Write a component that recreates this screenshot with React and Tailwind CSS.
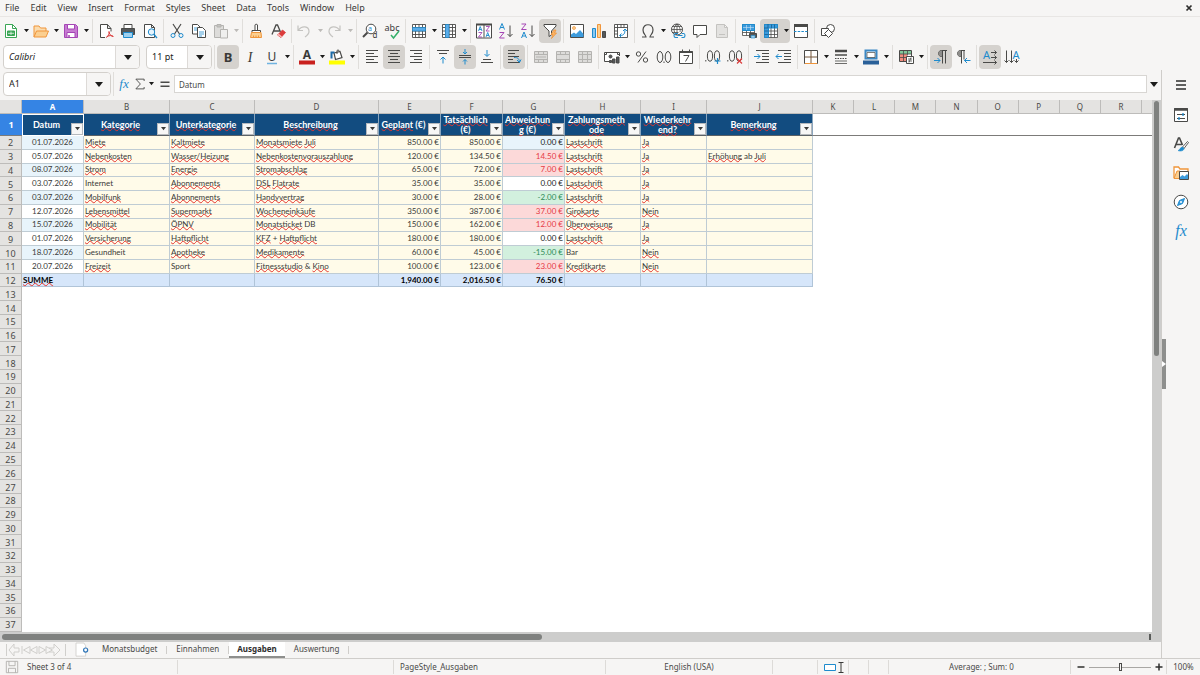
import React from 'react';
import clsx from 'clsx';

const BLUE = '#1e8bcd';
const ORANGE = '#f0953a';
const RED = '#dc3b3b';
const PURPLE = '#a546b5';
const GREY = '#c4c3c0';

const Svg = ({ children, className = 'size-4', stroke = '#4a4a48' }) => (
  <svg viewBox="0 0 16 16" className={clsx('shrink-0 overflow-visible', className)} fill="none" stroke={stroke} strokeWidth="1" aria-hidden="true">
    {children}
  </svg>
);

const Letter = ({ x = 8, y = 12, size = 10, fill = '#3a3a38', serif, italic, bold, children }) => (
  <text
    x={x}
    y={y}
    fontSize={size}
    fill={fill}
    stroke="none"
    textAnchor="middle"
    fontFamily={serif ? 'Liberation Serif, serif' : 'Noto Sans, sans-serif'}
    fontStyle={italic ? 'italic' : 'normal'}
    fontWeight={bold ? 700 : 400}
  >
    {children}
  </text>
);

const gridPath = 'M1.5 1.5h13v13h-13zM4.5 1.5v13M8 1.5v13M11.5 1.5v13M1.5 4.5h13M1.5 8h13M1.5 11.5h13';

const icons = {
  new: (
    <Svg stroke="#3aa655">
      <path d="M2.5 1.5h7l4 4v9h-11z" fill="#fff" />
      <path d="M9.5 1.5v4h4" />
      <path d="M4.500 8h7v4.500h-7z" fill="#3aa655" />
      <path d="M5 10.300h6M8 8.500v3.500" stroke="#fff" strokeWidth=".7" />
    </Svg>
  ),
  open: (
    <Svg stroke={ORANGE}>
      <path d="M1 14V3h5l1.500 2H13v3" fill="#fbdcae" />
      <path d="M1 14L3.500 8H15.500L13 14z" fill="#fbcf90" />
    </Svg>
  ),
  save: (
    <Svg stroke={PURPLE}>
      <path d="M1.500 1.500h11l2 2v11h-13z" fill="#c77bd2" />
      <path d="M4.500 1.500h7v4.500h-7zM4 14.500V9.500h8v5z" fill="#fff" />
      <path d="M6 12v2.500" strokeWidth="1.500" />
    </Svg>
  ),
  pdf: (
    <Svg>
      <path d="M7 14.500H2.500v-13h7l3.500 4v3M9.500 1.500v4H13" fill="#fff" />
      <path d="M8 14.500c2.500-1 3.500-4 3-6M15.500 13.500c-2-1.500-4-1-6.500 0M11 8.500c0 2 1.500 4.500 4 5" stroke={RED} />
    </Svg>
  ),
  print: (
    <Svg>
      <path d="M4 5.500v-4h8v4" fill="#fff" />
      <path d="M1.500 5.500h13v6h-13z" fill="#55585a" />
      <path d="M3.500 9.500h9v5h-9z" fill="#9fd0ee" stroke={BLUE} />
    </Svg>
  ),
  preview: (
    <Svg>
      <path d="M2.500 1.500h7l3 3v10h-10zM9.500 1.500v3h3" fill="#fff" />
      <circle cx="9.500" cy="9" r="3.200" fill="#e5f3fc" stroke={BLUE} />
      <path d="M12 11.500l3 3.500" stroke={BLUE} strokeWidth="1.300" />
    </Svg>
  ),
  cut: (
    <Svg>
      <path d="M4 1l6.500 10M12 1L5.500 11" strokeWidth="1.200" />
      <circle cx="4" cy="12.500" r="2" stroke={BLUE} />
      <circle cx="12" cy="12.500" r="2" stroke={BLUE} />
    </Svg>
  ),
  copy: (
    <Svg>
      <path d="M1.500 1.500h5l2.500 2.500v7h-7.500z" fill="#fff" />
      <path d="M6.500 4.500h5l3 3v7h-8z" fill="#fff" />
      <path d="M3 5h3M3 7h3M8 9h5M8 11h5M8 13h3" stroke={BLUE} strokeWidth=".8" />
    </Svg>
  ),
  paste: (
    <Svg stroke="#b4b3b0">
      <path d="M1.500 2.500h9v12h-9z" fill="#dddcda" />
      <path d="M4 1.500h4v2.500H4z" fill="#c4c3c0" />
      <path d="M7.500 6.500h7v8.500h-7z" fill="#efefee" />
    </Svg>
  ),
  clone: (
    <Svg>
      <path d="M7 7V2c0-1 2.500-1 2.500 0v5" fill="#fff" />
      <path d="M4 7.500h8.500v2H4z" fill="#fff" />
      <path d="M3.500 9.500h9.500l.5 5h-11z" fill="#fbcf90" stroke={ORANGE} />
      <path d="M5.500 14.500v-2M8 14.500v-2M10.500 14.500v-2" stroke={ORANGE} />
    </Svg>
  ),
  clear: (
    <Svg>
      <path d="M2 11.500L6 2h1.500l3 7M3.500 8h6" strokeWidth="1.300" />
      <path d="M7.500 12l5-5 3 2.500-4.500 5z" fill={RED} stroke={RED} strokeWidth=".8" />
      <path d="M7.500 12l3.500 2.500 1-1-3.500-3z" fill="#f9b8b8" stroke="none" />
    </Svg>
  ),
  undo: (
    <Svg stroke={GREY}>
      <path d="M1 2.500v5h5M1 7.500C5 2 12 3 12 8.500c0 2-2 4-4 5.500" strokeWidth="1.200" />
    </Svg>
  ),
  redo: (
    <Svg stroke={GREY}>
      <path d="M13 2.500v5H8M13 7.500C9 2 2 3 2 8.500c0 2 2 4 4 5.500" strokeWidth="1.200" />
    </Svg>
  ),
  find: (
    <Svg>
      <circle cx="9" cy="6" r="4.800" fill="#fff" />
      <path d="M5.500 9.500L1 14" strokeWidth="2" />
      <Letter x={8} y={8} size={7} fill={BLUE}>a</Letter>
      <Letter x={13} y={15} size={8}>d</Letter>
    </Svg>
  ),
  spell: (
    <Svg>
      <Letter x={8} y={7.5} size={9}>abc</Letter>
      <path d="M7 12l2.500 3L15 8" stroke="#35b06a" strokeWidth="1.500" />
    </Svg>
  ),
  row: (
    <Svg>
      <path d={gridPath} fill="#fff" strokeWidth=".9" />
      <path d="M1.500 4.500h13V8h-13z" fill="#5badea" stroke={BLUE} strokeWidth=".7" />
    </Svg>
  ),
  column: (
    <Svg>
      <path d={gridPath} fill="#fff" strokeWidth=".9" />
      <path d="M4.500 1.500H8v13H4.500z" fill="#5badea" stroke={BLUE} strokeWidth=".7" />
    </Svg>
  ),
  sort: (
    <Svg>
      <path d="M.500 1.500h15v13.500H.500zM8 1.500v13" fill="#fff" />
      <path d="M0 1.500h16" strokeWidth="2" />
      <path d="M2.500 8l1.700-4.500L6 8M3 6.500h2.500M10 14l1.700-4.500 1.800 4.500M10.500 12.500H13" stroke={BLUE} strokeWidth=".9" />
      <path d="M2.500 9.500H6L2.500 14H6M10 3.500h3.500L10 8h3.500" stroke={PURPLE} strokeWidth=".9" />
    </Svg>
  ),
  asc: (
    <Svg>
      <path d="M1.500 6.500L4 .500l2.500 6M2.300 4.500h3.400" stroke={BLUE} />
      <path d="M1.500 9.500h4.500l-4.500 5.500h5" stroke={PURPLE} />
      <path d="M12 2.500v11M9.500 11l2.500 2.500L14.500 11" />
    </Svg>
  ),
  desc: (
    <Svg>
      <path d="M1.500 1h4.500L1.500 6.500h5" stroke={PURPLE} />
      <path d="M1.500 15L4 9l2.500 6M2.300 13h3.400" stroke={BLUE} />
      <path d="M12 2.500v11M9.500 11l2.500 2.500L14.500 11" />
    </Svg>
  ),
  filter: (
    <Svg>
      <path d="M2 1.500h12v1.500L9.500 8v4L7 13.500V8L2 3z" fill="#fff" />
      <path d="M12 7l-3 4.500h2L9.500 15.500 14.500 10h-2L14 7z" fill="#fbb466" stroke={ORANGE} strokeWidth=".8" />
    </Svg>
  ),
  image: (
    <Svg>
      <path d="M1.500 1.500h13v13h-13z" fill="#fff" />
      <circle cx="5" cy="5" r="1.500" fill="#fbcf90" stroke={ORANGE} strokeWidth=".7" />
      <path d="M2 14v-2.500l3-2 2 1.500L11 7l3.500 4v3z" fill="#3d9bdc" stroke="none" />
    </Svg>
  ),
  chart: (
    <Svg>
      <path d="M1.500 5.500h3v9h-3z" fill="#8dc8ef" stroke={BLUE} />
      <path d="M6.500 1.500h3v13h-3z" fill="#fbcf90" stroke={ORANGE} />
      <path d="M11.500 8.500h3v6h-3z" fill="#55585a" />
    </Svg>
  ),
  pivot: (
    <Svg>
      <path d="M1.500 1.500h13v13h-13zM1.500 4.500h13M4.500 1.500v13M8 1.500v3M11 1.500v3M1.500 8h3M1.500 11h3" fill="#fff" strokeWidth=".9" />
      <path d="M7 12.500c4 0 5-2 5-6M10 8l2-2 2 2M8.500 10.500l-2 2 2 2" stroke={BLUE} />
    </Svg>
  ),
  omega: (
    <Svg>
      <path d="M2 14h4c0-2-3-3-3-7 0-7 10-7 10 0 0 4-3 5-3 7h4" strokeWidth="1.200" />
    </Svg>
  ),
  link: (
    <Svg>
      <circle cx="7" cy="6.500" r="5.500" fill="#fff" />
      <path d="M1.500 6.500h11M7 1v10M2.500 3.500h9M2.500 9.500h6M7 1c-4 3-4 8 0 11M7 1c3 3 3.500 6 3 8" strokeWidth=".8" />
      <path d="M8 10.500H5.500c-2 0-2 4 0 4H8M11.500 10.500H13.500c2 0 2 4 0 4h-2M7.500 12.500h5" stroke={BLUE} strokeWidth="1.100" />
    </Svg>
  ),
  comment: (
    <Svg>
      <path d="M1.500 2.500h13v9H8L5 14.500v-3H1.500z" fill="#fff" />
    </Svg>
  ),
  header: (
    <Svg stroke={GREY}>
      <path d="M2.500 1.500h8l3 3v10h-11zM10.500 1.500v3h3" fill="#e3e2e0" />
      <path d="M5 11.500h6" />
    </Svg>
  ),
  area: (
    <Svg>
      <path d="M1.500 1.500h12v11h-12zM5.500 1.500v11M9.500 1.500v11M1.500 9.500h12" fill="#fff" strokeWidth=".8" />
      <path d="M1.500 1.500h12v6h-12z" fill="#3d9bdc" stroke={BLUE} />
      <path d="M5.500 2v5M9.500 2v5M2 4.500h11" stroke="#c9e4f7" strokeWidth=".6" />
      <path d="M8.500 10.500h7v4h-7z" fill="#55585a" />
      <path d="M10 12.500h4v2.500h-4z" fill="#9fd0ee" stroke={BLUE} strokeWidth=".6" />
    </Svg>
  ),
  freeze: (
    <Svg>
      <path d={gridPath} fill="#fff" strokeWidth=".8" />
      <path d="M1.500 1.500h13v3.500H5.500v9.500h-4z" fill="#3d9bdc" stroke={BLUE} />
      <path d="M1.500 8h4M1.500 11.500h4M8.500 1.500V5M11.500 1.500V5M5 1v4H1" stroke="#175c8c" strokeWidth=".8" />
    </Svg>
  ),
  split: (
    <Svg>
      <path d="M1.500 1.500h13v13h-13z" fill="#fff" />
      <path d="M1 2.500h14" strokeWidth="3" />
      <path d="M1 8.500h14" stroke={BLUE} strokeDasharray="2.500 1.200" />
    </Svg>
  ),
  shapes: (
    <Svg>
      <circle cx="10.500" cy="5.500" r="4" fill="#fff" />
      <path d="M1.500 5.500h7v7h-7z" fill="#fff" />
      <path d="M8.500 6.500l4 4-4 4-4-4z" fill="#fff" />
    </Svg>
  ),
  bold: <Svg><Letter size={13} y={12.5} bold>B</Letter></Svg>,
  italic: <Svg><Letter size={14} y={12.5} serif italic>I</Letter></Svg>,
  underline: (
    <Svg>
      <Letter size={12} y={11.5}>U</Letter>
      <path d="M3 14.500h10" stroke="#6fb3e0" strokeWidth="1.500" />
    </Svg>
  ),
  color: (
    <Svg>
      <Letter size={12} y={10} bold>A</Letter>
      <path d="M0 13.500h16" stroke="#c9211e" strokeWidth="4" />
    </Svg>
  ),
  highlight: (
    <Svg>
      <path d="M5 4l6-1.500 2 6-6.500 2z" fill="#fff" strokeWidth="1.200" />
      <path d="M8 5V2c0-1.500 2-1.500 2 0" />
      <path d="M2.500 9.500V3.500h3" stroke="#1c6ba8" strokeWidth="2" />
      <path d="M0 13.500h16" stroke="#ffff00" strokeWidth="4" />
    </Svg>
  ),
  left: <Svg><path d="M2 1.500h12M2 4.500h8M2 7.500h12M2 10.500h8M2 13.500h12" /></Svg>,
  center: <Svg><path d="M2 1.500h12M4 4.500h8M2 7.500h12M4 10.500h8M2 13.500h12" /></Svg>,
  right: <Svg><path d="M2 1.500h12M6 4.500h8M2 7.500h12M6 10.500h8M2 13.500h12" /></Svg>,
  top: (
    <Svg>
      <path d="M2 1.500h12M4 4.500h8" />
      <path d="M8 14.500v-6M5.500 10.500L8 8l2.500 2.500" stroke={BLUE} />
    </Svg>
  ),
  middle: (
    <Svg>
      <path d="M2 6.500h12M2 8.500h12" />
      <path d="M8 0v5M6 3l2 2 2-2M8 15.500v-5M6 12.500l2-2 2 2" stroke={BLUE} />
    </Svg>
  ),
  bottom: (
    <Svg>
      <path d="M2 13.500h12M4 10.500h8" />
      <path d="M8 1v6M5.500 5L8 7.500 10.500 5" stroke={BLUE} />
    </Svg>
  ),
  wrap: (
    <Svg>
      <path d="M2 1.500h11M2 4.500h7M2 7.500h11M2 10.500h5M2 13.500h12" />
      <path d="M8 8.500c4 0 5 1 5.500 4.500M11 11l2.500 2.500L15 10.500" stroke={BLUE} />
    </Svg>
  ),
  merge: <Svg stroke="#b4b3b0"><path d="M1.500 2.500h13v11h-13zM1.500 5.500h13M1.500 10.500h13M5.500 2.500v3M10.500 2.500v3M5.500 10.500v3M10.500 10.500v3M3 8h10" fill="#dddcda" /></Svg>,
  mergeCells: <Svg stroke="#b4b3b0"><path d="M1.500 2.500h13v11h-13zM1.500 5.500h13M1.500 10.500h13M5.500 2.500v3M10.500 2.500v3M5.500 10.500v3M10.500 10.500v3" fill="#dddcda" /></Svg>,
  splitCells: <Svg stroke="#b4b3b0"><path d="M1.500 2.500h13v11h-13zM1.500 5.500h13M1.500 10.500h13M5.500 2.500v11M10.500 2.500v11" fill="#dddcda" /></Svg>,
  currency: (
    <Svg>
      <path d="M7 12.500H.500v-9h15V7M2.500 3.500v2h-2M13.500 3.500v2h2" fill="#fff" />
      <circle cx="6.500" cy="7.500" r="1.500" fill="#55585a" />
      <path d="M5.500 11.500h2v2h-2zM8.500 10h2.500v4H8.500zM12.500 8h2.500v6h-2.500z" fill="#55585a" />
    </Svg>
  ),
  percent: (
    <Svg>
      <circle cx="4.500" cy="5" r="2.200" />
      <circle cx="11.500" cy="11" r="2.200" />
      <path d="M12 2.500L4 13.500" />
    </Svg>
  ),
  number: (
    <Svg>
      <ellipse cx="4" cy="8" rx="2.800" ry="5.500" />
      <ellipse cx="12" cy="8" rx="2.800" ry="5.500" />
      <path d="M8 12.500v1.500" />
    </Svg>
  ),
  date: (
    <Svg>
      <path d="M1.500 2.500h13v12h-13z" fill="#fff" />
      <path d="M1.500 3h13" strokeWidth="2" />
      <path d="M4.500 .500v2M11.500 .500v2M5.500 6.500H11l-3.500 6" />
    </Svg>
  ),
  addDecimal: (
    <Svg>
      <ellipse cx="5" cy="7" rx="2.600" ry="5.200" />
      <ellipse cx="12" cy="7" rx="2.600" ry="5.200" />
      <path d="M.800 11v1.500" />
      <path d="M12.500 9v6M9.500 12h6" stroke={BLUE} strokeWidth="1.200" />
    </Svg>
  ),
  delDecimal: (
    <Svg>
      <ellipse cx="5" cy="7" rx="2.600" ry="5.200" />
      <ellipse cx="12" cy="7" rx="2.600" ry="5.200" />
      <path d="M.800 11v1.500" />
      <path d="M10 9.500l5 5M15 9.500l-5 5" stroke={RED} strokeWidth="1.200" />
    </Svg>
  ),
  indent: (
    <Svg>
      <path d="M2 1.500h13M8 4.500h7M8 7.500h7M8 10.500h7M2 13.500h13" />
      <path d="M0 7.500h6M3.500 5L6 7.500 3.500 10" stroke={BLUE} />
    </Svg>
  ),
  outdent: (
    <Svg>
      <path d="M2 1.500h13M8 4.500h7M8 7.500h7M8 10.500h7M2 13.500h13" />
      <path d="M6 7.500H0M2.500 5L0 7.500 2.500 10" stroke={BLUE} />
    </Svg>
  ),
  borders: (
    <Svg>
      <path d="M1.500 1.500h13v13h-13z" fill="#fff" />
      <path d="M8 2v12M2 8h12" stroke="#77583c" />
      <path d="M2 14.500h12" stroke={ORANGE} />
    </Svg>
  ),
  lineStyle: (
    <Svg>
      <path d="M2 2h12" strokeWidth="2.500" />
      <path d="M2 6h12" strokeWidth="1.500" />
      <path d="M2 9.500h12" strokeDasharray="1.500 1" />
      <path d="M2 12h12M2 14.500h12" strokeWidth=".8" />
    </Svg>
  ),
  lineColor: (
    <Svg>
      <path d="M2.500 1.500h11v8h-11z" fill="#fff" stroke="#3b88c4" strokeWidth="2" />
      <path d="M4 3.500h8v5H4z" strokeWidth=".7" />
      <path d="M0 13.500h16" stroke="#2a6099" strokeWidth="4" />
    </Svg>
  ),
  conditional: (
    <Svg>
      <path d="M1.500 1.500h12v11h-12z" fill="#fff" />
      <path d="M2 2h11v3H2z" fill="#7fc99a" stroke="none" />
      <path d="M2 5h7v7H2z" fill="#ef8b7d" stroke="none" />
      <path d="M1.500 5h12M1.500 8.500h8M5.500 1.500v11M9.500 1.500v5" strokeWidth=".8" />
      <path d="M8.500 7.500h7v7h-7z" fill="#fff" />
      <path d="M10 10h4M10 12h4M13 8.500l-2 5" strokeWidth=".8" />
    </Svg>
  ),
  ltr: (
    <Svg>
      <path d="M14 1.500H8.500c-4 0-4 6 0 6h1M9.500 1.500v13M12.500 1.500v13" />
      <path d="M9 2H8C5 2 5 7 8 7h1z" fill="#8e8d8b" stroke="none" />
      <path d="M1 11.500h6M4.500 9L7 11.500 4.500 14" stroke={BLUE} />
    </Svg>
  ),
  rtl: (
    <Svg>
      <path d="M10 1.500H5.500c-4 0-4 6 0 6h1M6.500 1.500v13M9 1.500v9" />
      <path d="M6 2H5C2 2 2 7 5 7h1z" fill="#8e8d8b" stroke="none" />
      <path d="M15.500 11.500H9.500M12 9l-2.500 2.500L12 14" stroke={BLUE} />
    </Svg>
  ),
  horizontal: (
    <Svg>
      <Letter x={4.5} y={9.5} size={11} fill={BLUE}>A</Letter>
      <path d="M9 3.500h5.500M12.500 1.500l2 2-2 2M9 8.500h5.500M12.500 6.500l2 2-2 2M1 13.500h13.500M12.500 11.500l2 2-2 2" />
    </Svg>
  ),
  vertical: (
    <Svg>
      <Letter x={12} y={9.5} size={11} fill={BLUE}>A</Letter>
      <path d="M2.500 1.500v12M.500 11.500l2 2 2-2M7.500 1.500v12M5.500 11.500l2 2 2-2M12.500 10v3.500M10.500 11.500l2 2 2-2" />
    </Svg>
  ),
};

const standardBar = [
  ['new', 'New', 'menu'], ['open', 'Open', 'menu'], ['save', 'Save', 'menu'], '|',
  ['pdf', 'Export as PDF'], ['print', 'Print'], ['preview', 'Print Preview'], '|',
  ['cut', 'Cut'], ['copy', 'Copy'], ['paste', 'Paste', 'menu muted'], '|',
  ['clone', 'Clone Formatting'], ['clear', 'Clear Formatting'], '|',
  ['undo', 'Undo', 'menu muted'], ['redo', 'Redo', 'menu muted'], '|',
  ['find', 'Find and Replace'], ['spell', 'Spelling'], '|',
  ['row', 'Row', 'menu'], ['column', 'Column', 'menu'], '|',
  ['sort', 'Sort'], ['asc', 'Sort Ascending'], ['desc', 'Sort Descending'], ['filter', 'AutoFilter', 'active'], '|',
  ['image', 'Insert Image'], ['chart', 'Insert Chart'], ['pivot', 'Pivot Table'], '|',
  ['omega', 'Special Character', 'menu'], ['link', 'Hyperlink'], ['comment', 'Comment'], ['header', 'Headers and Footers', 'muted'], '|',
  ['area', 'Print Area'], ['freeze', 'Freeze Rows and Columns', 'menu active'], ['split', 'Split Window'], '|',
  ['shapes', 'Show Draw Functions'],
];

const formattingBar = [
  ['bold', 'Bold', 'active'], ['italic', 'Italic'], ['underline', 'Underline', 'menu'], '|',
  ['color', 'Font Color', 'menu'], ['highlight', 'Background Color', 'menu'], '|',
  ['left', 'Align Left'], ['center', 'Center Horizontally', 'active'], ['right', 'Align Right'], '|',
  ['top', 'Align Top'], ['middle', 'Center Vertically', 'active'], ['bottom', 'Align Bottom'], '|',
  ['wrap', 'Wrap Text', 'active'], '|',
  ['merge', 'Merge and Center', 'muted'], ['mergeCells', 'Merge Cells', 'muted'], ['splitCells', 'Unmerge Cells', 'muted'], '|',
  ['currency', 'Currency', 'menu'], ['percent', 'Percent'], ['number', 'Number'], ['date', 'Date'], '|',
  ['addDecimal', 'Add Decimal Place'], ['delDecimal', 'Delete Decimal Place'], '|',
  ['indent', 'Increase Indent'], ['outdent', 'Decrease Indent'], '|',
  ['borders', 'Borders', 'menu'], ['lineStyle', 'Border Style', 'menu'], ['lineColor', 'Border Color', 'menu'], '|',
  ['conditional', 'Conditional', 'menu'], '|',
  ['ltr', 'Left-To-Right', 'active'], ['rtl', 'Right-To-Left'], '|',
  ['horizontal', 'Text direction horizontal', 'active'], ['vertical', 'Text direction vertical'],
];

const Caret = ({ className = 'text-[#1c1c1b]', large }) => (
  <svg viewBox="0 0 8 5" className={clsx('shrink-0', large ? 'w-2' : 'w-[5px]', className)} fill="currentColor" aria-hidden="true">
    <path d="M0 0h8L4 5z" />
  </svg>
);

const Separator = () => <span className="mx-0.5 h-6 w-px shrink-0 bg-[#e0dedb]" />;

const ToolBar = ({ items, label }) => (
  <div role="toolbar" aria-label={label} className="flex items-center">
    {items.map((item, i) => {
      if (item === '|') return <Separator key={i} />;
      const [icon, name, flags = ''] = item;
      const muted = flags.includes('muted');
      return (
        <div key={i} className={clsx('flex items-center rounded', flags.includes('active') && 'bg-[#d5d2ce]')}>
          <button type="button" aria-label={name} disabled={muted} className="flex h-6 w-[22px] items-center justify-center">
            {icons[icon]}
          </button>
          {flags.includes('menu') && (
            <button type="button" aria-label={`${name} options`} disabled={muted} className="flex h-6 w-2 items-center justify-center">
              <Caret className={muted ? 'text-[#bdbbb8]' : 'text-[#1c1c1b]'} />
            </button>
          )}
        </div>
      );
    })}
  </div>
);

const ComboBox = ({ label, value, className, italic }) => (
  <div className={clsx('flex h-6 shrink-0 overflow-hidden rounded border border-[#d3d0cc] bg-white', className)}>
    <input
      aria-label={label}
      defaultValue={value}
      className={clsx('min-w-0 flex-1 px-[5px] text-[9px] text-[#1c1c1b] outline-none', italic && 'italic')}
    />
    <button type="button" aria-label={`${label} list`} className="flex w-6 items-center justify-center border-l border-[#dddad7] bg-[#f6f5f4]">
      <Caret large />
    </button>
  </div>
);

const menus = ['File', 'Edit', 'View', 'Insert', 'Format', 'Styles', 'Sheet', 'Data', 'Tools', 'Window', 'Help'];

const columns = [
  { id: 'A', width: 'w-[62px]', title: ['Datum'] },
  { id: 'B', width: 'w-[86px]', title: ['Kategorie'] },
  { id: 'C', width: 'w-[85px]', title: ['Unterkategorie'] },
  { id: 'D', width: 'w-[124px]', title: ['Beschreibung'] },
  { id: 'E', width: 'w-[62px]', title: ['Geplant (€)'] },
  { id: 'F', width: 'w-[62px]', title: ['Tatsächlich', '(€)'] },
  { id: 'G', width: 'w-[62px]', title: ['Abweichun', 'g (€)'] },
  { id: 'H', width: 'w-[76px]', title: ['Zahlungsmeth', 'ode'] },
  { id: 'I', width: 'w-[66px]', title: ['Wiederkehr', 'end?'] },
  { id: 'J', width: 'w-[106px]', title: ['Bemerkung'] },
];
const emptyColumns = ['K', 'L', 'M', 'N', 'O', 'P', 'Q', 'R'];

const expenses = [
  ['01.07.2026', 'Miete', 'Kaltmiete', 'Monatsmiete Juli', '850.00 €', '850.00 €', '0.00 €', 'Lastschrift', 'Ja', ''],
  ['05.07.2026', 'Nebenkosten', 'Wasser/Heizung', 'Nebenkostenvorauszahlung', '120.00 €', '134.50 €', '14.50 €', 'Lastschrift', 'Ja', 'Erhöhung ab Juli'],
  ['08.07.2026', 'Strom', 'Energie', 'Stromabschlag', '65.00 €', '72.00 €', '7.00 €', 'Lastschrift', 'Ja', ''],
  ['03.07.2026', 'Internet', 'Abonnements', 'DSL Flatrate', '35.00 €', '35.00 €', '0.00 €', 'Lastschrift', 'Ja', ''],
  ['03.07.2026', 'Mobilfunk', 'Abonnements', 'Handyvertrag', '30.00 €', '28.00 €', '-2.00 €', 'Lastschrift', 'Ja', ''],
  ['12.07.2026', 'Lebensmittel', 'Supermarkt', 'Wocheneinkäufe', '350.00 €', '387.00 €', '37.00 €', 'Girokarte', 'Nein', ''],
  ['15.07.2026', 'Mobilität', 'ÖPNV', 'Monatsticket DB', '150.00 €', '162.00 €', '12.00 €', 'Überweisung', 'Ja', ''],
  ['01.07.2026', 'Versicherung', 'Haftpflicht', 'KFZ + Haftpflicht', '180.00 €', '180.00 €', '0.00 €', 'Lastschrift', 'Ja', ''],
  ['18.07.2026', 'Gesundheit', 'Apotheke', 'Medikamente', '60.00 €', '45.00 €', '-15.00 €', 'Bar', 'Nein', ''],
  ['20.07.2026', 'Freizeit', 'Sport', 'Fitnessstudio & Kino', '100.00 €', '123.00 €', '23.00 €', 'Kreditkarte', 'Nein', ''],
];
const totals = ['SUMME', '', '', '', '1,940.00 €', '2,016.50 €', '76.50 €', '', '', ''];

// words the English spell checker accepts
const known = ['Datum', 'Internet', 'Gesundheit', 'Sport', 'Bar', 'DB', 'ab', '+', '&', '(€)'];

const Spelled = ({ text }) =>
  text.split(' ').map((word, i) => (
    <React.Fragment key={i}>
      {i > 0 && ' '}
      {known.includes(word) || /\d|€/.test(word) ? (
        word
      ) : (
        <span className="underline decoration-[#e5352e] decoration-wavy decoration-1 -underline-offset-1 [text-decoration-skip-ink:none]">{word}</span>
      )}
    </React.Fragment>
  ));

const cellStyle = (value, col, row) => {
  if (col === 0) return clsx('text-center', row % 2 ? 'bg-white' : 'bg-[#e8f4fb]');
  if (col === 6) {
    if (value.startsWith('-')) return 'text-right bg-[#d2f0de] text-[#2e8b57]';
    if (value !== '0.00 €') return 'text-right bg-[#fcd9d9] text-[#e63946]';
    return clsx('text-right text-[#1c1c1b]', row % 2 ? 'bg-white' : 'bg-[#e8f4fb]');
  }
  return clsx('bg-[#fffbe9]', (col === 4 || col === 5) && 'text-right');
};

const RowHeader = ({ n }) => (
  <th scope="row" className="border-r border-b border-[#bdbcba] bg-[#e4e3e1] p-0 pt-px text-center text-[9px] font-normal text-[#4a4a48]">{n}</th>
);

const Sheet = () => (
  <table className="h-full w-full table-fixed border-separate border-spacing-0 leading-[11px]">
    <colgroup>
      <col className="w-[22px]" />
      {columns.map((c) => <col key={c.id} className={c.width} />)}
      {emptyColumns.map((c) => <col key={c} />)}
      <col className="w-2.5" />
    </colgroup>
    <thead>
      <tr className="h-3.5 bg-[#e4e3e1] text-[8px] text-[#4a4a48]">
        <td className="border-r border-b border-[#bdbcba] p-0" />
        {columns.map((c) => (
          <th
            key={c.id}
            scope="col"
            className={clsx('border-r border-b border-[#bdbcba] p-0', c.id === 'A' ? 'bg-[#3584e4] font-bold text-white' : 'font-normal')}
          >
            {c.id}
          </th>
        ))}
        {emptyColumns.map((c) => (
          <th key={c} scope="col" className="border-r border-b border-[#bdbcba] p-0 font-normal">{c}</th>
        ))}
        <td className="border-b border-[#bdbcba] p-0" />
      </tr>
    </thead>
    <tbody>
      <tr className="h-[22px]">
        <th scope="row" className="border-b border-[#7c7b79] bg-[#3584e4] p-0 text-[9px] font-bold text-white">1</th>
        {columns.map((c) => (
          <td
            key={c.id}
            className={clsx(
              "relative border-r border-b border-r-[#8aa5bd] border-b-[#5c6266] bg-[#124c80] p-0 pr-3 text-center font-['Lato',sans-serif] text-[9px] leading-[10px] font-bold whitespace-nowrap text-white",
              c.id === 'A' && 'outline-1 -outline-offset-1 outline-white'
            )}
          >
            {c.title.map((line) => <div key={line}><Spelled text={line} /></div>)}
            <button type="button" aria-label={`Filter ${c.title.join('')}`} className="absolute right-0 bottom-0 flex size-3 items-center justify-center border border-[#b5b9bd] bg-[#f7f7f6]">
              <Caret className="text-[#3a3a38]" />
            </button>
          </td>
        ))}
        <td colSpan={9} className="border-b border-[#7c7b79] p-0" />
      </tr>
      {expenses.map((values, row) => (
        <tr key={row}>
          <RowHeader n={row + 2} />
          {values.map((value, col) => (
            <td
              key={col}
              className={clsx("border-r border-b border-[#bfccd4] p-0 px-px font-['Lato',sans-serif] text-[8px] whitespace-nowrap", cellStyle(value, col, row))}
            >
              <Spelled text={value} />
            </td>
          ))}
          <td colSpan={9} className="p-0" />
        </tr>
      ))}
      <tr>
        <RowHeader n={12} />
        {totals.map((value, col) => (
          <td
            key={col}
            className={clsx("border-r border-b border-[#b0c4d8] bg-[#d6e6fa] p-0 px-px font-['Lato',sans-serif] text-[8px] font-bold whitespace-nowrap text-black", col > 0 && 'text-right')}
          >
            <Spelled text={value} />
          </td>
        ))}
        <td colSpan={9} className="p-0" />
      </tr>
      {Array.from({ length: 25 }, (_, i) => (
        <tr key={i}>
          <RowHeader n={i + 13} />
          <td colSpan={19} className="p-0" />
        </tr>
      ))}
    </tbody>
  </table>
);

const FormulaBar = () => (
  <div className="flex h-7 items-center pl-[3px]">
    <ComboBox label="Name Box" value="A1" className="w-[108px]" />
    <Separator />
    <button type="button" aria-label="Function Wizard" className="flex w-4 justify-center">
      <Svg className="size-3.5"><Letter size={15} y={13} fill={BLUE} serif italic>fx</Letter></Svg>
    </button>
    <button type="button" aria-label="Select Function" className="flex w-6 items-center justify-between px-0.5">
      <Svg className="size-3"><path d="M13.500 4V1.500H2.500L8.500 8l-6 6.500h11V12" strokeWidth="1.200" /></Svg>
      <Caret />
    </button>
    <button type="button" aria-label="Formula" className="flex w-[18px] justify-center">
      <Svg className="size-3"><path d="M2 5.500h12M2 11h12" strokeWidth="2" /></Svg>
    </button>
    <input aria-label="Input line" defaultValue="Datum" className="h-[18px] min-w-0 flex-1 border border-[#d8d6d3] bg-white px-1 text-[8px] text-[#4a4a48] outline-none" />
    <button type="button" aria-label="Expand Formula Bar" className="flex w-[14px] justify-center">
      <Caret large />
    </button>
  </div>
);

const SideBar = () => (
  <aside className="relative flex w-[39px] shrink-0 flex-col items-center gap-[13px] border-l border-[#cfcdca] pt-2">
    <button type="button" aria-label="Sidebar Settings">
      <Svg><path d="M3 3h10M3 7h10M3 11h10" stroke="#2e2e2d" strokeWidth="1.500" /></Svg>
    </button>
    <button type="button" aria-label="Properties">
      <Svg>
        <path d="M1.500 1.500h13v13h-13z" fill="#fff" />
        <path d="M1 2.500h14" strokeWidth="2.500" />
        <path d="M4 7.500h8M4 11.500h8" />
        <path d="M10 6v3M6 10v3" stroke={BLUE} strokeWidth="1.300" />
      </Svg>
    </button>
    <button type="button" aria-label="Styles">
      <Svg>
        <path d="M1.500 12L5.500 2h1l3 7M3 8.500h6" strokeWidth="1.600" />
        <path d="M14.500 5.500L9.500 11l1.500 1.500 4.500-6z" fill="#fff" strokeWidth=".9" />
        <path d="M5 14.500c2 0 2-3.500 4.500-3.500L11 12.500c0 2.500-4 3-6 2z" fill={BLUE} stroke={BLUE} strokeWidth=".6" />
      </Svg>
    </button>
    <button type="button" aria-label="Gallery">
      <Svg>
        <path d="M1 13V2h4.500l1.500 2h8v3" fill="#fff" stroke={ORANGE} strokeWidth="1.300" />
        <path d="M1 13.500L4 6h3v7.500z" fill="#fbcf90" stroke={ORANGE} />
        <path d="M6.500 6.500h9v8h-9z" fill="#fff" />
        <path d="M7 14v-2l2.500-2 2 1.500L14 9l1 1v4z" fill="#3d9bdc" stroke="none" />
      </Svg>
    </button>
    <button type="button" aria-label="Navigator">
      <Svg>
        <circle cx="8" cy="8" r="6.800" fill="#fff" />
        <path d="M11.500 4.500L9.500 9.500l-5 2 2-5z" fill="#3d9bdc" stroke={BLUE} />
        <circle cx="8" cy="8" r="1" fill="#fff" stroke="none" />
      </Svg>
    </button>
    <button type="button" aria-label="Functions">
      <Svg><Letter size={16} y={13} fill={BLUE} serif italic>fx</Letter></Svg>
    </button>
    <button type="button" aria-label="Hide Sidebar" className="absolute top-[269px] left-0 flex h-[50px] w-1 items-center bg-[#8e8f8d]">
      <svg viewBox="0 0 4 6" className="w-1" fill="#fff" aria-hidden="true"><path d="M0 0l4 3-4 3z" /></svg>
    </button>
  </aside>
);

const SheetTabs = () => (
  <div className="flex h-4 items-stretch text-[8px] text-[#4a4a48]">
    <div className="flex w-[72px] items-center pl-1.5">
      <svg viewBox="0 0 60 14" className="w-[60px]" fill="none" stroke="#d0cfcc" aria-hidden="true">
        <path d="M.500 1v12M3 7l5-6v4h5v4H8v4zM16 3v8M24 3.500L17.500 7l6.500 3.500zM31 3.500L24.500 7l6.500 3.500zM33 3.500L39.500 7 33 10.500zM40 3.500L46.500 7 40 10.500zM43 5h5V1l6 6-6 6V9h-5M59.500 1v12" />
      </svg>
    </div>
    <button type="button" aria-label="Add Sheet" className="flex w-[21px] items-center justify-center">
      <Svg className="size-3.5" stroke="#d0cfcc">
        <path d="M0 0h9l2 3v12H0z" fill="#fff" />
        <circle cx="11" cy="8" r="2.300" fill="#fff" stroke="#2f76b8" strokeWidth="1.400" />
      </Svg>
    </button>
    <div role="tablist" aria-label="Sheets" className="flex items-stretch">
      {['Monatsbudget', 'Einnahmen', 'Ausgaben', 'Auswertung'].map((name) => {
        const active = name === 'Ausgaben';
        return (
          <React.Fragment key={name}>
            <button
              type="button"
              role="tab"
              aria-selected={active}
              className={clsx(
                'flex items-center border-b-2',
                active ? 'border-[#8e8f8d] bg-white px-2 font-bold text-[#2e2e2d]' : 'border-transparent px-[9px]'
              )}
            >
              {name}
            </button>
            {!active && <span role="presentation" className="my-1 w-px bg-[#cfcdca]" />}
          </React.Fragment>
        );
      })}
    </div>
  </div>
);

const statusCell = 'flex items-center border-r border-[#dddbd8]';

const StatusBar = () => (
  <footer className="flex h-[17px] shrink-0 items-stretch border-t border-[#cfcdca] py-px text-[8px] text-[#4a4a48]">
    <div className={clsx(statusCell, 'w-[178px] gap-2 pl-[5px]')}>
      <Svg className="size-3.5" stroke="#b0afac">
        <path d="M1.500 1.500h13v13h-13zM4.500 1.500v5h7v-5M4 14.500v-5h8v5" />
      </Svg>
      Sheet 3 of 4
    </div>
    <div className={clsx(statusCell, 'w-[216px]')} />
    <div className={clsx(statusCell, 'w-[212px] pl-1.5')}>PageStyle_Ausgaben</div>
    <div className={clsx(statusCell, 'flex-1 justify-center')}>English (USA)</div>
    <div className={clsx(statusCell, 'w-[45px]')} />
    <div className={clsx(statusCell, 'w-[31px] justify-end pr-1')}>
      <svg viewBox="0 0 20 12" className="w-5" fill="none" aria-hidden="true">
        <path d="M.500 3.500h11v6H.500z" fill="#fff" stroke={BLUE} />
        <path d="M14.500 1.500h5M14.500 11.500h5M17 1.500v10" stroke="#3a3a38" />
      </svg>
    </div>
    <div className={clsx(statusCell, 'w-5')} />
    <div className={clsx(statusCell, 'w-5')} />
    <div className={clsx(statusCell, 'w-[182px] justify-center pl-1')}>Average: ; Sum: 0</div>
    <div className={clsx(statusCell, 'w-24 gap-1 pl-1.5')}>
      <button type="button" aria-label="Zoom out"><Svg className="size-2"><path d="M1 8h14" stroke="#2e2e2d" strokeWidth="3" /></Svg></button>
      <input
        type="range"
        aria-label="Zoom"
        defaultValue={50}
        className="h-2 w-0 min-w-0 flex-1 appearance-none bg-[linear-gradient(#a9a7a4,#a9a7a4)] bg-[length:100%_1px] bg-center bg-no-repeat [&::-webkit-slider-thumb]:h-2 [&::-webkit-slider-thumb]:w-[3px] [&::-webkit-slider-thumb]:appearance-none [&::-webkit-slider-thumb]:border [&::-webkit-slider-thumb]:border-[#4a4a48] [&::-webkit-slider-thumb]:bg-[#f6f5f4]"
      />
      <button type="button" aria-label="Zoom in" className="pr-[3px]"><Svg className="size-2"><path d="M1 8h14M8 1v14" stroke="#2e2e2d" strokeWidth="3" /></Svg></button>
    </div>
    <div className="flex w-[33px] items-center justify-center">100%</div>
  </footer>
);

const App = () => (
  <div className="flex h-screen flex-col overflow-hidden bg-[#f6f5f4] font-['Noto_Sans',sans-serif] text-[9px] text-[#3a3a38]">
    <header className="flex shrink-0 flex-col">
      <div className="flex h-[17px] items-center justify-between border-b border-[#e8e6e4] pr-[7px]">
        <nav className="flex gap-px">
          {menus.map((m) => <button key={m} type="button" className="px-[5px]">{m}</button>)}
        </nav>
        <button type="button" aria-label="Close Document">
          <Svg className="size-2"><path d="M3 3l10 10M13 3L3 13" stroke="#2e2e2d" strokeWidth="3.500" /></Svg>
        </button>
      </div>
      <div className="flex h-[27px] items-center"><ToolBar items={standardBar} label="Standard" /></div>
      <div className="flex h-[26px] items-center pl-[3px]">
        <ComboBox label="Font Name" value="Calibri" className="w-[137px]" italic />
        <ComboBox label="Font Size" value="11 pt" className="ml-1.5 w-[66px]" />
        <Separator />
        <ToolBar items={formattingBar} label="Formatting" />
      </div>
    </header>
    <div className="flex min-h-0 flex-1">
      <main className="flex min-w-0 flex-1 flex-col">
        <FormulaBar />
        <div className="mt-0.5 flex min-h-0 flex-1">
          <div className="min-w-0 flex-1 bg-white"><Sheet /></div>
          <div className="flex w-[9px] flex-col items-center bg-[#cdcdcc] pt-px">
            <div className="h-[48%] w-[5px] rounded-full bg-[#7f817f]" />
          </div>
        </div>
        <div className="flex h-2.5 items-center justify-between bg-[#cdcdcc] pr-2.5 pl-0.5">
          <div className="h-1.5 w-[47%] rounded-full bg-[#7f817f]" />
          <div className="h-1.5 w-0.5 bg-[#5a5c5a]" />
        </div>
        <SheetTabs />
      </main>
      <SideBar />
    </div>
    <StatusBar />
  </div>
);

export default App;
